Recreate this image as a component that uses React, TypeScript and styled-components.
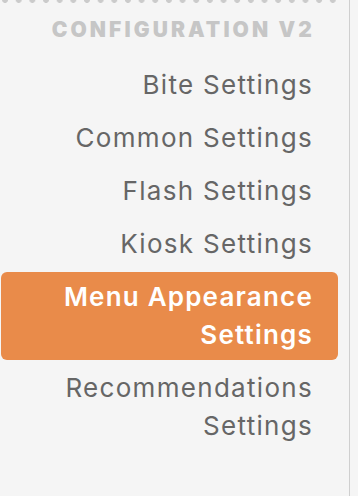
import { createGlobalStyle } from 'styled-components'
import styled from 'styled-components'

const GlobalStyle = createGlobalStyle`
  html, body {
    margin: 0;
    padding: 0;
    background: #f5f5f5;
  }
  * { box-sizing: border-box; }
`

const Sidebar = styled.nav`
  width: 350px;
  height: 496px;
  background: #f5f5f5;
  border-right: 1px solid #cfcfcf;
  display: flex;
  flex-direction: column;
  font-family: Inter, 'Liberation Sans', sans-serif;
`

const Dots = styled.div`
  height: 4px;
  margin-right: 10px;
  background-image: radial-gradient(circle, #cbcbcb 2.6px, transparent 3.2px);
  background-size: 13.67px 8px;
  background-position: -1.8px -4px;
  background-repeat: repeat-x;
`

const Heading = styled.h2`
  margin: 12px 0 0;
  padding-right: 34px;
  text-align: right;
  font-size: 21px;
  line-height: 28px;
  font-weight: 900;
  color: #c6c6c6;
  letter-spacing: 3.1px;
`

const List = styled.ul`
  list-style: none;
  margin: 16px 11px 0 1px;
  padding: 0;
  display: flex;
  flex-direction: column;
  gap: 3px;
`

const Item = styled.li<{ $active?: boolean }>`
  padding: 6px 25px 6px 10px;
  text-align: right;
  font-size: 26px;
  line-height: 38px;
  letter-spacing: ${p => (p.$active ? '1.2px' : '1.3px')};
  border-radius: 6px;
  color: ${p => (p.$active ? '#ffffff' : '#666666')};
  background: ${p => (p.$active ? '#e98b4a' : 'transparent')};
  font-weight: ${p => (p.$active ? 600 : 400)};
`

const items = [
  'Bite Settings',
  'Common Settings',
  'Flash Settings',
  'Kiosk Settings',
  'Menu Appearance Settings',
  'Recommendations Settings',
]

export default function App() {
  return (
    <>
      <GlobalStyle />
      <Sidebar>
        <Dots />
        <Heading>CONFIGURATION V2</Heading>
        <List>
          {items.map(label => (
            <Item key={label} $active={label === 'Menu Appearance Settings'}>
              {label}
            </Item>
          ))}
        </List>
      </Sidebar>
    </>
  )
}
